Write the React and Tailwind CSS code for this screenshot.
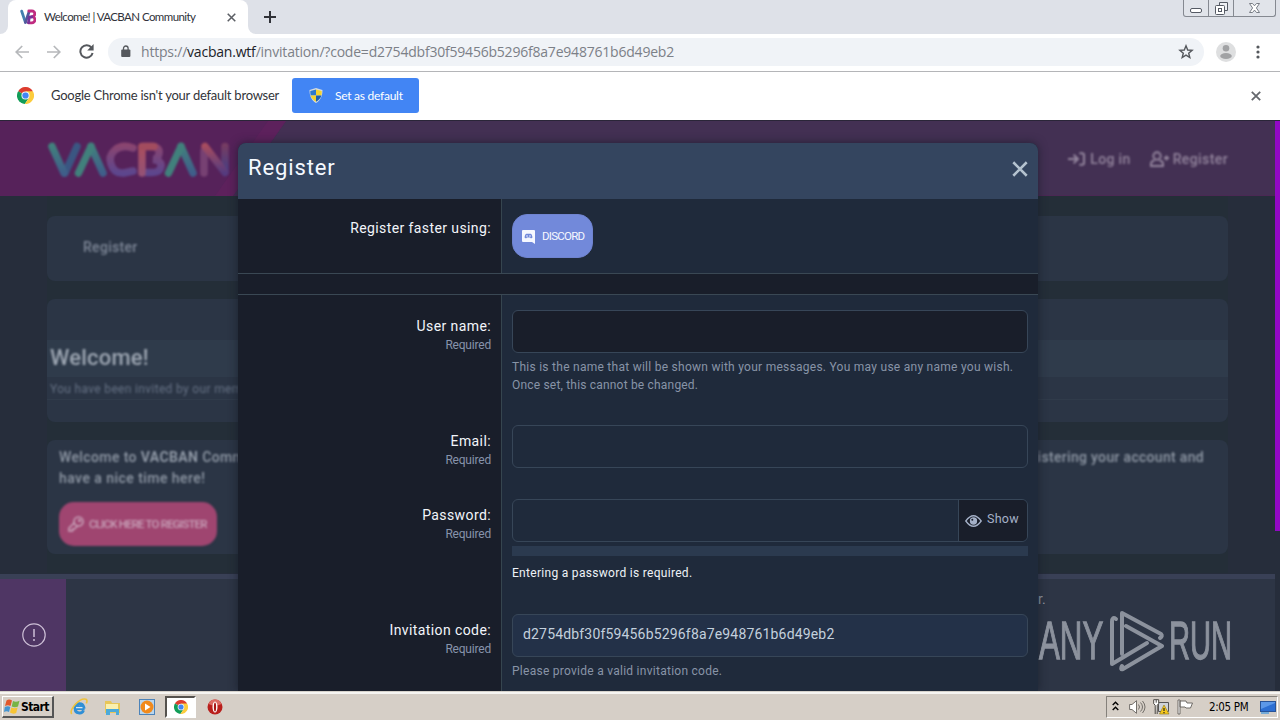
import React from "react";

const ui = "font-[Lato,'Open_Sans',sans-serif]";

function ChromeLogo({ size, className = "" }) {
  return (
    <svg width={size} height={size} viewBox="0 0 48 48" className={className}>
      <path d="M24 24 3.2 12A24 24 0 0 1 44.8 12Z" fill="#dd3c2e" />
      <path d="M24 24 3.2 12A24 24 0 0 0 22 48L34 30Z" fill="#129d58" />
      <path d="M24 12H44.8A24 24 0 0 1 22 48L34.4 30Z" fill="#fccc3c" />
      <circle cx="24" cy="24" r="11.5" fill="#f1f1f1" />
      <circle cx="24" cy="24" r="8.8" fill="#4285f4" />
    </svg>
  );
}

function Cross({ size, color, width = 2 }) {
  return (
    <svg width={size} height={size} viewBox="0 0 10 10" stroke={color} strokeWidth={width} className="shrink-0">
      <path d="M.8.8 9.2 9.2M9.2.8.8 9.2" />
    </svg>
  );
}

function TabStrip() {
  return (
    <div className="flex h-[34px] items-start bg-[#dee1e8]">
      <div className="mt-px flex h-[33px] w-[8px] items-end bg-white">
        <div className="h-full w-full rounded-br-[8px] bg-[#dee1e8]" />
      </div>
      <div className="flex h-[34px] w-[240px] items-center rounded-t-[8px] bg-white">
        <svg width="16" height="16" viewBox="0 0 16 16" fill="none" strokeWidth="2.8" strokeLinecap="round" strokeLinejoin="round" className="ml-[12px] shrink-0">
          <path d="M1.7 2.2 5.4 13.4" stroke="#437fae" />
          <path d="M5.4 13.4 9 3" stroke="#54569b" />
          <path d="M8.8 2h3.1a2.7 2.7 0 0 1 .1 5.7 3 3 0 0 1-.2 6.1H8.4" stroke="#c02b80" />
          <path d="M8.5 13.7 9.3 8h2.5" stroke="#74349a" />
        </svg>
        <span className={`${ui} ml-[8px] w-[183px] shrink-0 whitespace-nowrap text-[11.5px] leading-[16px] tracking-[-0.57px] text-[#30323a]`}>Welcome! | VACBAN Community</span>
        <Cross size={9} color="#5b5e64" width={1.7} />
      </div>
      <div className="mt-px h-[33px] w-[8px] bg-white">
        <div className="h-full w-full rounded-bl-[8px] bg-[#dee1e8]" />
      </div>
      <svg width="12" height="12" viewBox="0 0 12 12" stroke="#303238" strokeWidth="2" className="ml-[8px] mt-[11px]"><path d="M6 0v12M0 6h12" /></svg>
      <div className="ml-auto mr-[4px] flex h-[17px] w-[93px] rounded-b-[3px] border border-t-0 border-[#858991] bg-[#e1e4ea]">
        <div className="flex w-[25px] items-end justify-center border-r border-[#858991] pb-[3px]">
          <div className="h-[5px] w-[12px] rounded-[2px] border border-[#555a64] bg-white" />
        </div>
        <div className="flex w-[25px] items-center justify-center border-r border-[#858991]">
          <svg width="13" height="13" viewBox="0 0 13 13" fill="none" stroke="#555a64"><path d="M4.5 3V.5h8v8H10" fill="#eef0f4" /><rect x=".5" y="3.5" width="9" height="9" rx="1" fill="#fff" /><rect x="3.5" y="6.5" width="3" height="3" /></svg>
        </div>
        <div className="flex flex-1 items-center justify-center pb-px">
          <svg width="11" height="10" viewBox="0 0 11 10" fill="#fff" stroke="#6b7079" strokeWidth=".9"><path d="M.5.5h3l2 2.3 2-2.3h3L7.4 5l3.1 4.5h-3l-2-2.4-2 2.4h-3L3.6 5Z" /></svg>
        </div>
      </div>
    </div>
  );
}

function Toolbar() {
  return (
    <div className="flex h-[38px] items-center border-b border-[#b4b5b8] bg-white pb-[2px]">
      <svg width="14" height="14" viewBox="0 0 14 14" fill="none" stroke="#b6b8bb" strokeWidth="1.7" className="ml-[15px]"><path d="M14 7H1.5M7.2 1 1.2 7l6 6" /></svg>
      <svg width="14" height="14" viewBox="0 0 14 14" fill="none" stroke="#b6b8bb" strokeWidth="1.7" className="ml-[18px]"><path d="M0 7h12.5M6.8 1l6 6-6 6" /></svg>
      <svg width="15" height="15" viewBox="0 0 15 15" fill="none" stroke="#55585d" strokeWidth="2" className="ml-[18px]"><path d="M12.6 3.8A6.2 6.2 0 1 0 13.6 9" /><path d="M14.6 0v6.5H8.2Z" fill="#55585d" stroke="none" /></svg>
      <div className="ml-[14px] flex h-[28px] w-[1096px] items-center rounded-full bg-[#f0f3f7]">
        <svg width="10" height="13" viewBox="0 0 10 13" className="ml-[13px]"><rect x=".2" y="4.5" width="9.2" height="7.5" rx="1" fill="#55585d" /><path d="M2.5 5V3.3a2.3 2.3 0 0 1 4.600 0V5" fill="none" stroke="#55585d" strokeWidth="1.3" /></svg>
        <span className="ml-[10px] whitespace-nowrap font-['Open_Sans',sans-serif] text-[14px] leading-[20px] tracking-[-0.21px] text-[#7c8087]">https://<span className="text-[#202228]">vacban.wtf</span>/invitation/?code=d2754dbf30f59456b5296f8a7e948761b6d49eb2</span>
        <svg width="16" height="16" viewBox="0 0 16 16" fill="none" stroke="#55585d" strokeWidth="1.4" className="ml-auto mr-[10px]"><path d="M8 1.8 9.7 6l4.4.3-3.400 2.900 1.100 4.300L8 11.100l-3.800 2.400 1.100-4.300L1.900 6.300 6.300 6Z" /></svg>
      </div>
      <svg width="20" height="20" viewBox="0 0 20 20" className="ml-[12px]"><circle cx="10" cy="10" r="10" fill="#dedfe0" /><circle cx="10" cy="6.3" r="3.3" fill="#a1a2a4" /><ellipse cx="10" cy="14" rx="5.8" ry="3" fill="#a1a2a4" /></svg>
      <svg width="4" height="14" viewBox="0 0 4 14" fill="#55585d" className="ml-[20px]"><circle cx="2" cy="2" r="1.6" /><circle cx="2" cy="7" r="1.6" /><circle cx="2" cy="12" r="1.6" /></svg>
    </div>
  );
}

function InfoBar() {
  return (
    <div className="flex h-[49px] items-center border-b border-[#2a2538] bg-white pb-px">
      <ChromeLogo size={17} className="ml-[17px]" />
      <span className={`${ui} ml-[17px] w-[241px] whitespace-nowrap text-[13px] tracking-[-0.24px] text-[#33353a]`}>Google Chrome isn't your default browser</span>
      <div className="flex h-[35px] w-[127px] items-center rounded-[3px] bg-[#4285f4]">
        <svg width="14" height="15" viewBox="0 0 14 15" className="ml-[17px]"><path d="M7 0 13.5 2C13.5 8 11.5 12.5 7 15 2.500 12.500.5 8 .5 2Z" fill="#d5dce0" /><path d="M7 1.4V7.5H1.6Q1.200 5 1.300 3Z" fill="#2c79cf" /><path d="M7 1.4 12.7 3Q12.800 5 12.400 7.500H7Z" fill="#f3d32f" /><path d="M1.600 7.500H7V13.800Q2.800 11.500 1.600 7.500Z" fill="#f3d32f" /><path d="M7 7.500h5.400Q11.200 11.500 7 13.800Z" fill="#1d5fae" /></svg>
        <span className={`${ui} ml-[12px] whitespace-nowrap text-[12px] tracking-[-0.26px] text-white`}>Set as default</span>
      </div>
      <div className="ml-auto mr-[19px]"><Cross size={10} color="#65686d" width={1.8} /></div>
    </div>
  );
}

function Wordmark() {
  return (
    <svg width="190" height="44" viewBox="0 0 190 44" fill="none" strokeWidth="7.500" strokeLinecap="round" className="ml-[44px] mt-[16px] opacity-90 blur-[1px]">
      <defs>
        <linearGradient id="teal" gradientUnits="userSpaceOnUse" x1="0" y1="8" x2="0" y2="36"><stop stopColor="#3f8c80" /><stop offset="1" stopColor="#3d6590" /></linearGradient>
        <linearGradient id="rose" gradientUnits="userSpaceOnUse" x1="0" y1="8" x2="0" y2="36"><stop stopColor="#914972" /><stop offset="1" stopColor="#5e4a93" /></linearGradient>
        <linearGradient id="coral" gradientUnits="userSpaceOnUse" x1="0" y1="8" x2="0" y2="36"><stop stopColor="#b2525f" /><stop offset="1" stopColor="#553e83" /></linearGradient>
        <linearGradient id="stem" gradientUnits="userSpaceOnUse" x1="0" y1="8" x2="0" y2="36"><stop stopColor="#b5535d" /><stop offset="1" stopColor="#9c5778" /></linearGradient>
        <linearGradient id="edge" gradientUnits="userSpaceOnUse" x1="0" y1="8" x2="0" y2="36"><stop stopColor="#7a3f63" /><stop offset="1" stopColor="#42438a" /></linearGradient>
      </defs>
      <path d="M33 9.500 21 36" stroke="#385c87" />
      <path d="M8 9.500 20 36" stroke="url(#teal)" />
      <path d="M47 9.500 59 36" stroke="url(#teal)" />
      <path d="M47 9.500 34.500 36" stroke="#3f8b80" />
      <path d="M89 11Q78 7 71 13T67 27Q70 37 80 36L89 34" stroke="url(#rose)" />
      <path d="M99 9.500h10q7 1 6 7t-6 6q9 1 8 7t-9 6h-6" stroke="url(#rose)" />
      <path d="M98 10V36" stroke="url(#stem)" />
      <path d="M98 9.500h12" stroke="#ab515f" />
      <path d="M137 9.500 149 36" stroke="url(#teal)" />
      <path d="M137 9.500 124.500 36" stroke="#3f8b80" />
      <path d="M181 9.500V34" stroke="url(#edge)" />
      <path d="M160 14V36" stroke="#7b4576" />
      <path d="m161 9.500 20 26" stroke="url(#coral)" />
    </svg>
  );
}

const bgFont = "font-[Roboto,sans-serif] font-medium";

function Page() {
  return (
    <div className="flex h-[571px] w-[1275px] flex-col bg-[#262d3b]">
      <header className="grid h-[75px] shrink-0 border-b border-[#4b2854] bg-[#433053]">
        <svg width="1275" height="75" className="col-start-1 row-start-1"><path d="M0 0H286L233 75H0Z" fill="#56225a" /><path d="M286 0 233 75H215L268 0Z" fill="#6a2062" opacity=".35" /></svg>
        <div className="col-start-1 row-start-1 flex">
          <Wordmark />
          <div className="ml-auto mr-[47px] flex h-[76px] items-center text-[#94869e] blur-[0.8px]">
            <svg width="17" height="14" viewBox="0 0 18 14" fill="none" stroke="currentColor" strokeWidth="2.200"><path d="M0 7h10M6 2.500 10.500 7 6 11.500M12 1h3q2 0 2 2v8q0 2-2 2h-3" /></svg>
            <span className={`${bgFont} ml-[5px] text-[14px] tracking-[0.35px]`}>Log in</span>
            <svg width="20" height="16" viewBox="0 0 20 16" fill="none" stroke="currentColor" strokeWidth="1.900" className="ml-[19px]"><circle cx="7" cy="5" r="3.700" /><path d="M4.500 9.500Q1 10 1 13v2h12v-2q0-3-3.500-3.500M14 7h5M16.500 4.500v5" /></svg>
            <span className={`${bgFont} ml-[3px] text-[14px] tracking-[0.4px]`}>Register</span>
          </div>
        </div>
      </header>
      <main className="mx-[47px] flex h-[377px] shrink-0 flex-col bg-[#242e38] pt-[20px]">
        <div className="flex h-[65px] items-center rounded-[8px] bg-[#2b3545] pb-[2px] pl-[36px]">
          <span className={`${bgFont} text-[14px] tracking-[0.3px] text-[#7e8797] blur-[0.8px]`}>Register</span>
        </div>
        <div className="mt-[18px] flex h-[123px] flex-col rounded-[8px] bg-[#2b3545] pt-[41px]">
          <div className="flex h-[37px] items-center bg-[#2f3b4b] pb-[2px] pl-[3px]">
            <span className={`${bgFont} text-[22px] tracking-[0.2px] text-[#9da6b2] blur-[0.8px]`}>Welcome!</span>
          </div>
          <div className="flex h-[23px] items-center border-b border-[#303b4a] pl-[3px] pt-[2px]">
            <span className="font-[Roboto,sans-serif] text-[12px] tracking-[0.33px] text-[#667285] blur-[0.8px]">You have been invited by our member</span>
          </div>
        </div>
        <div className={`${bgFont} mt-[18px] h-[114px] rounded-[8px] bg-[#2b3545] pl-[12px] pr-[24px] pt-[7px] text-[14px] leading-[21px] text-[#9099a6]`}>
          <div className="flex justify-between blur-[0.8px]">
            <span className="tracking-[0.38px]">Welcome to <b>VACBAN</b> Community!</span>
            <span className="tracking-[0.31px]">Thank you for registering your account and</span>
          </div>
          <div className="tracking-[0.45px] blur-[0.8px]">have a nice time here!</div>
          <div className="mt-[13px] flex h-[44px] w-[158px] items-center rounded-[15px] bg-[#9f4570] pl-[9px] text-[#c9a3ba] blur-[0.8px]">
            <svg width="16" height="16" viewBox="0 0 16 16" fill="none" stroke="currentColor" strokeWidth="1.600" className="shrink-0"><path d="M6.500 6.500 1 12v3h3.500v-2h2l3-3" /><circle cx="10.500" cy="5.500" r="4.500" /><circle cx="11.500" cy="4.500" r=".8" /></svg>
            <span className="ml-[5px] whitespace-nowrap text-[11.5px] tracking-[-0.82px]">CLICK HERE TO REGISTER</span>
          </div>
        </div>
      </main>
      <div className="mt-auto flex h-[118px] border-t-[5px] border-[#394056] bg-[#2d3545]">
        <div className="flex w-[66px] items-center justify-center bg-[#4f3664] pb-[2px] pl-[2px]">
          <svg width="24" height="24" viewBox="0 0 24 24" fill="none" stroke="#cdbfd6" strokeWidth="1.200"><circle cx="12" cy="12" r="11.200" /><path d="M12 6v8M12 16v2" strokeWidth="1.500" /></svg>
        </div>
        <div className="flex-1 pl-[972px] pt-[11px] font-[Roboto,sans-serif] text-[14px] leading-[18px] text-[#929ba7]">r.</div>
      </div>
    </div>
  );
}

function Field({ label, children, className }) {
  return (
    <div className={`flex ${className}`}>
      <div className="flex w-[264px] shrink-0 flex-col items-end border-r border-[#36454f] bg-[#191e2a] pr-[10px] pt-[6px] leading-[20px]">
        <span className="text-[14px] tracking-[0.4px] text-[#f2f5fa]">{label}</span>
        <span className="text-[12px] leading-[18px] tracking-[-0.2px] text-[#8793aa]">Required</span>
      </div>
      <div className="min-w-0 flex-1 pl-[10px] pr-[10px] text-[12px] leading-[18px] tracking-[0.265px] text-[#8894a7]">{children}</div>
    </div>
  );
}

const box = "h-[43px] rounded-[6px] border border-[#374658]";

function Modal() {
  return (
    <div className="absolute left-[238px] top-[22px] flex h-[548px] w-[800px] flex-col overflow-hidden rounded-t-[8px] bg-[#1f2a3b] font-[Roboto,sans-serif] shadow-[0_0_10px_rgba(20,25,38,0.7)]">
      <div className="flex h-[56px] shrink-0 items-center justify-between bg-[#34455f] pl-[10px] pr-[10px]">
        <h1 className="pb-[7px] text-[22px] tracking-[0.88px] text-[#f5f9ff]">Register</h1>
        <div className="pb-[4px]"><Cross size={16} color="#b4c2cf" width={1.6} /></div>
      </div>
      <div className="flex h-[75px] shrink-0 border-b border-[#3a4854]">
        <div className="w-[264px] border-r border-[#36454f] bg-[#191e2a] pr-[10px] pt-[19px] text-right text-[14px] leading-[20px] tracking-[0.4px] text-[#f2f5fa]">Register faster using:</div>
        <div className="pl-[10px] pt-[15px]">
          <div className="flex h-[44px] w-[81px] items-center rounded-[15px] border border-[#6f83cf] bg-[#7289da] pl-[9px] text-[#f6f8ff]">
            <svg width="13" height="15" viewBox="0 0 13 15" fill="#f6f8ff" className="shrink-0"><path d="M1 1h11q1 0 1 1v13l-3-2H1q-1 0-1-1V2q0-1 1-1Z" /><path d="M2.500 8.500Q3 5 4.500 4.800h4Q10 5 10.500 8.500L9 9.500l-1-1H5l-1 1Z" fill="#7289da" /><circle cx="5" cy="7" r=".8" /><circle cx="8" cy="7" r=".8" /></svg>
            <span className="ml-[7px] pt-px text-[11.5px] tracking-[-0.75px]">DISCORD</span>
          </div>
        </div>
      </div>
      <div className="h-[21px] shrink-0 border-b border-[#3a4854] bg-[#191e2a]" />
      <div className="flex h-[15px] shrink-0"><div className="w-[264px] border-r border-[#36454f] bg-[#191e2a]" /></div>
      <Field label="User name:" className="h-[115px] shrink-0">
        <div className={`${box} bg-[#191e2a]`} />
        <p className="mt-[5px] whitespace-nowrap">This is the name that will be shown with your messages. You may use any name you wish.<br /><span className="tracking-[0.19px]">Once set, this cannot be changed.</span></p>
      </Field>
      <Field label="Email:" className="h-[74px] shrink-0">
        <div className={box} />
      </Field>
      <Field label="Password:" className="h-[115px] shrink-0">
        <div className={`${box} flex overflow-hidden`}>
          <div className="ml-auto flex w-[69px] items-center border-l border-[#374658] bg-[#191e2a] pl-[6px] text-[#a5b1c8]">
            <svg width="17" height="12" viewBox="0 0 17 12" fill="none" stroke="currentColor" strokeWidth="1.300"><path d="M.8 6Q8.500-4.500 16.200 6 8.500 16.500.8 6Z" /><circle cx="8.500" cy="6" r="3" fill="currentColor" /><circle cx="7.300" cy="4.700" r="1" fill="#191e2a" stroke="none" /></svg>
            <span className="ml-[5px] pb-[3px] text-[12.5px]">Show</span>
          </div>
        </div>
        <div className="mt-[4px] h-[10px] bg-[#2b3a4f]" />
        <p className="mt-[8px] tracking-[0.3px] text-[#eef2f7]">Entering a password is required.</p>
      </Field>
      <Field label="Invitation code:" className="flex-1">
        <div className={`${box} flex items-center bg-[#233148] pb-[3px] pl-[10px] text-[14px] tracking-[0.17px] text-[#c3d0dd]`}>d2754dbf30f59456b5296f8a7e948761b6d49eb2</div>
        <p className="mt-[5px]">Please provide a valid invitation code.</p>
      </Field>
    </div>
  );
}

function Watermark() {
  return (
    <div className="absolute left-[1039px] top-[488px] flex h-[64px] w-[194px] items-center text-[#8c929d]">
      <span className="w-[70px] shrink-0 origin-left scale-x-[0.59] whitespace-nowrap font-['Liberation_Sans',sans-serif] text-[53px] leading-[60px] [-webkit-text-stroke:1.3px_#8c929d]">ANY</span>
      <svg width="56" height="62" viewBox="0 0 56 62" fill="none" stroke="currentColor" strokeWidth="4" strokeLinejoin="round" strokeLinecap="round" className="shrink-0">
        <path d="M7 9Q3 6 3 12V54L38 33" /><path d="M13 44V3L52 24Q54 26 51 28" /><path d="M17 16 53 36 14 59Q11 60 13 56" />
      </svg>
      <span className="ml-[4px] w-[65px] origin-left scale-x-[0.55] whitespace-nowrap font-['Liberation_Sans',sans-serif] text-[53px] leading-[60px] [-webkit-text-stroke:1.3px_#8c929d]">RUN</span>
    </div>
  );
}

function WindowsFlag() {
  return (
    <svg width="16" height="15" viewBox="0 0 16 15" className="shrink-0"><path d="M2.500 1.500Q5-.3 8 1.500L6.500 7Q4 5.500 1 7Z" fill="#e2582b" /><path d="M9 2q3 1.500 6.500-.3L14 7.500q-3 1.500-6.300 0Z" fill="#77b445" /><path d="M.8 8Q4 6.500 6.300 8L5 13Q2.500 11.500 0 13Z" fill="#4595d1" /><path d="M7.300 8.500q3 1.300 6.300 0L12.200 14Q9 15.500 6 13.500Z" fill="#f7c434" /></svg>
  );
}

function Taskbar() {
  return (
    <div className="flex h-[29px] items-start border-t border-[#d6d2cb] bg-[#d6cfc7]">
      <div className="flex h-[28px] w-full items-start border-t-2 border-[#f6f5f2]">
        <div className="ml-[2px] mt-[2px] flex h-[22px] w-[52px] items-center border border-b-2 border-r-2 border-b-[#555] border-l-white border-r-[#555] border-t-white pl-px">
          <WindowsFlag />
          <span className="ml-px font-['DejaVu_Sans_Condensed','DejaVu_Sans',sans-serif] text-[12px] font-bold tracking-[-0.6px] text-black">Start</span>
        </div>
        <svg width="18" height="18" viewBox="0 0 18 18" fill="none" className="ml-[16px] mt-[4px]"><path d="M14.600 10.500H5.200a4.300 4.300 0 0 0 8.300 1.800M5.200 9a4.400 4.400 0 0 1 8.500 0Z" stroke="#2f8fd6" strokeWidth="2.900" /><path d="M6 9.600h6.500" stroke="#d6e6ee" strokeWidth="1.300" /><path d="M1.700 16C-1 12 9-.5 16 1.200q1.800 1 .3 4.200" stroke="#efc33b" strokeWidth="1.600" /></svg>
        <svg width="17" height="16" viewBox="0 0 17 16" className="ml-[16px] mt-[5px]"><path d="M1 2h6l1 2h8v10H1Z" fill="#e8c658" /><path d="M2 5h12v5H2Z" fill="#fbf0ae" /><path d="M2 10h13v6h-3v-3H6v3H2Z" fill="#4caad9" /></svg>
        <svg width="16" height="16" viewBox="0 0 16 16" className="ml-[18px] mt-[5px]"><rect x=".5" y=".5" width="15" height="15" fill="#b9d6ee" stroke="#4c83b9" /><circle cx="8" cy="8" r="6.500" fill="#f18a1c" /><path d="M6 4.500v7L11.500 8Z" fill="#fff" /></svg>
        <div className="ml-[10px] mt-[2px] flex h-[22px] w-[31px] items-center justify-center border-2 border-b-white border-l-[#55524e] border-r-white border-t-[#55524e] bg-white"><ChromeLogo size={14} /></div>
        <svg width="16" height="16" viewBox="0 0 16 16" className="ml-[11px] mt-[5px]"><circle cx="8" cy="8" r="7.500" fill="#b91f1c" /><path d="M1.500 5a7 7 0 0 1 13 0Q8 8 1.500 5Z" fill="#dc6b64" /><ellipse cx="8" cy="8" rx="2.500" ry="5.600" fill="#fff" /><ellipse cx="8" cy="8" rx="1.100" ry="4.600" fill="#a81614" /></svg>
        <div className="ml-auto mr-[2px] mt-[2px] flex h-[22px] w-[172px] items-center border border-b-white border-l-[#85817b] border-r-white border-t-[#85817b]">
          <svg width="7" height="10" viewBox="0 0 7 10" fill="none" stroke="#000" strokeWidth="1.400" className="ml-[5px] mb-[3px]"><path d="m.7 4 2.800-2.800L6.300 4M.7 9l2.800-2.800L6.300 9" /></svg>
          <svg width="17" height="14" viewBox="0 0 17 14" className="ml-[10px]" stroke="#65625e" fill="none" strokeWidth=".9"><path d="M.6 4.500H3L7.500.7v12.600L3 9.500H.6Z" fill="#fff" /><path d="M9.500 4.500q2 2.500 0 5M11.500 2.500q4 4.500 0 9M13.500 1q5 6 0 12" /></svg>
          <svg width="17" height="16" viewBox="0 0 17 16" className="ml-[7px]"><path d="M5.500 3.500h10v9h-10Z" fill="#cfd3d9" stroke="#555" /><path d="M.7.700h5v4l-1.500 1.500V15M2.200 6.200V15M.7.700v4l1.500 1.500M3.200.7v3" fill="#fff" stroke="#4a4844" /><path d="m11 6 5 9H6.500Z" fill="#f7c91d" stroke="#8b7313" strokeWidth=".6" /><path d="M11 9v3M11 13v1.300" stroke="#222" strokeWidth="1.200" /></svg>
          <svg width="17" height="16" viewBox="0 0 17 16" fill="#fff" stroke="#625f5a" strokeWidth=".9" className="ml-[7px]"><path d="M1 1h2v14H1ZM3 2h6l1 2h5.500l-2 5H9L8 8H3Z" /></svg>
          <span className="ml-[15px] whitespace-nowrap pt-px font-['DejaVu_Sans_Condensed','DejaVu_Sans',sans-serif] text-[11.5px] tracking-[-0.35px] text-black">2:05 PM</span>
          <svg width="16" height="13" viewBox="0 0 16 13" className="ml-auto mr-px"><rect x=".5" y=".5" width="15" height="10" fill="#2d6fd2" stroke="#285397" /><path d="M1 8 15 2V1H1Z" fill="#5c98e8" /><path d="M1 12h8" stroke="#75abd8" strokeWidth="2" /></svg>
        </div>
      </div>
    </div>
  );
}

export default function App() {
  return (
    <div className="flex h-[720px] w-[1280px] flex-col overflow-hidden bg-white">
      <TabStrip />
      <Toolbar />
      <InfoBar />
      <div className="relative flex h-[570px] shrink-0 overflow-hidden bg-[#262d3b]">
        <Page />
        <div className="h-[410px] w-[5px] bg-[#9208c4]" />
        <Modal />
        <Watermark />
      </div>
      <Taskbar />
    </div>
  );
}
